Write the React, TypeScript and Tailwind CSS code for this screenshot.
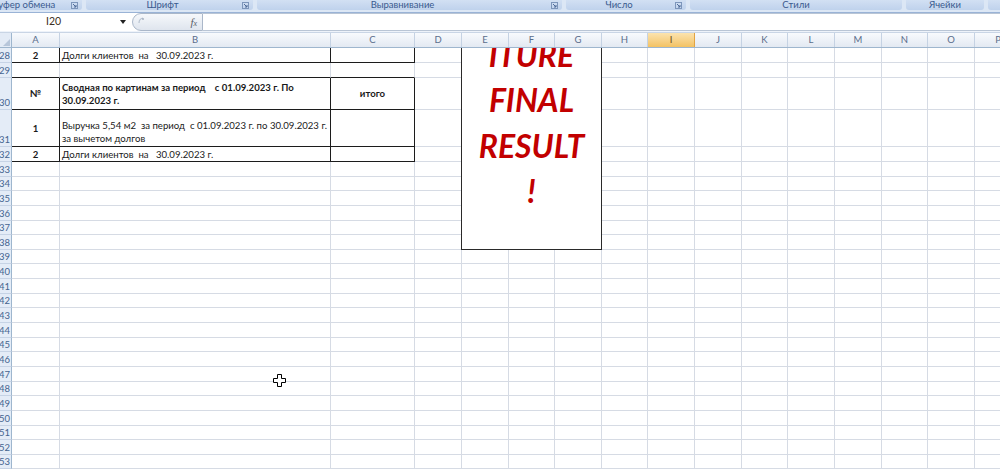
import React from "react";

type Col = { name: string; w: string };

const COLS: Col[] = [
  { name: "A", w: "w-[48px]" },
  { name: "B", w: "w-[271px]" },
  { name: "C", w: "w-[84px]" },
  { name: "D", w: "w-[47px]" },
  { name: "E", w: "w-[47px]" },
  { name: "F", w: "w-[46px]" },
  { name: "G", w: "w-[47px]" },
  { name: "H", w: "w-[46px]" },
  { name: "I", w: "w-[47px]" },
  { name: "J", w: "w-[47px]" },
  { name: "K", w: "w-[46px]" },
  { name: "L", w: "w-[47px]" },
  { name: "M", w: "w-[47px]" },
  { name: "N", w: "w-[46px]" },
  { name: "O", w: "w-[47px]" },
  { name: "P", w: "w-[47px]" },
];

const GRID = "border-r border-b border-[#d6dbe4]";
const BOXED = "border-r border-b border-[#1c1c1c]";
const UNDERLINED = "border-r border-b border-r-[#d6dbe4] border-b-[#1c1c1c]";

type RowDef = {
  n: number;
  h: string;
  // border style for columns A..C
  edge?: string;
  cells?: React.ReactNode[];
};

const bold = "font-bold";

const ROWS: RowDef[] = [
  {
    n: 28,
    h: "h-[15px]",
    edge: BOXED,
    cells: [
      <div className={`flex h-full items-center justify-center ${bold}`}>2</div>,
      <div className="flex h-full items-center whitespace-pre pl-[2px]">Долги клиентов  на   30.09.2023 г.</div>,
      null,
    ],
  },
  { n: 29, h: "h-[15px]", edge: UNDERLINED },
  {
    n: 30,
    h: "h-[32px]",
    edge: BOXED,
    cells: [
      <div className={`flex h-full items-center justify-center ${bold}`}>№</div>,
      <div className={`flex h-full flex-col justify-center whitespace-pre pl-[2px] ${bold}`}>
        <div>Сводная по картинам за период    с 01.09.2023 г. По</div>
        <div>30.09.2023 г.</div>
      </div>,
      <div className={`flex h-full items-center justify-center ${bold}`}>итого</div>,
    ],
  },
  {
    n: 31,
    h: "h-[37px]",
    edge: BOXED,
    cells: [
      <div className={`flex h-full items-center justify-center ${bold}`}>1</div>,
      <div className="flex h-full flex-col justify-end whitespace-pre pb-[1px] pl-[2px]">
        <div>Выручка 5,54 м2  за период  с 01.09.2023 г. по 30.09.2023 г.</div>
        <div>за вычетом долгов</div>
      </div>,
      null,
    ],
  },
  {
    n: 32,
    h: "h-[15px]",
    edge: BOXED,
    cells: [
      <div className={`flex h-full items-center justify-center ${bold}`}>2</div>,
      <div className="flex h-full items-center whitespace-pre pl-[2px]">Долги клиентов  на   30.09.2023 г.</div>,
      null,
    ],
  },
];

for (let n = 33; n <= 54; n++) ROWS.push({ n, h: "h-[14.65px]" });

function Launcher() {
  return (
    <svg width="7" height="7" viewBox="0 0 7 7" className="absolute right-[4px] top-[2px]">
      <rect x="0.5" y="0.5" width="6" height="6" fill="none" stroke="#7d96bb" />
      <path d="M2 2 L5 5 M5 3 L5 5 L3 5" stroke="#4e6a96" fill="none" />
    </svg>
  );
}

function Group({ w, label, launcher, className = "" }: { w: string; label?: string; launcher?: boolean; className?: string }) {
  return (
    <div
      className={`relative flex h-[10px] shrink-0 justify-center rounded-b-[3px] bg-gradient-to-b from-[#d2e0f3] to-[#bfd2ec] ${w} ${launcher ? "pr-[14px]" : ""} ${className}`}
    >
      {label && <span className="text-[9.5px] leading-[10px] text-[#3a5a8e]">{label}</span>}
      {launcher && <Launcher />}
    </div>
  );
}

function RibbonLabels() {
  return (
    <div className="flex h-[13px] gap-[4px] overflow-hidden border-b border-[#9ab3d6] bg-[#dce7f5]">
      <Group w="w-[102px]" label="Буфер обмена" launcher className="ml-[-20px]" />
      <Group w="w-[167px]" label="Шрифт" launcher />
      <Group w="w-[305px]" label="Выравнивание" launcher />
      <Group w="w-[120px]" label="Число" launcher />
      <Group w="w-[212px]" label="Стили" />
      <Group w="w-[78px]" label="Ячейки" />
      <Group w="w-[80px]" />
    </div>
  );
}

function FormulaBar() {
  return (
    <div className="flex h-[18px] items-stretch bg-white">
      <div className="flex w-[118px] items-center pl-[46px] text-[10.5px] text-[#3d3024]">I20</div>
      <div className="flex w-[14px] items-center">
        <svg width="6" height="4" viewBox="0 0 6 4" className="ml-[2px]">
          <path d="M0 0 H6 L3 4 Z" fill="#222" />
        </svg>
      </div>
      <div className="relative flex w-[71px] items-center justify-end rounded-l-full border border-[#aab7c9] bg-gradient-to-b from-[#f6f8fb] to-[#dfe5ee] pr-[5px]">
        <svg width="8" height="8" viewBox="0 0 8 8" className="absolute left-[5px] top-[3px]">
          <path d="M1 6 Q1 2 5 1" stroke="#b9c3d1" fill="none" strokeWidth="1.2" />
          <circle cx="5" cy="2" r="0.9" fill="#a0acbd" />
        </svg>
        <span className="font-['Liberation_Serif',serif] text-[11px] italic text-[#555c66]">
          f<span className="text-[8px]">x</span>
        </span>
      </div>
      <div className="flex-1 border-y border-[#b9c5d5] bg-white" />
    </div>
  );
}

function HeaderRow() {
  return (
    <div className="flex h-[15px] border-b border-[#9eb6ce]">
      <div className="relative w-[12px] shrink-0 border-r border-[#9eb6ce] bg-[#e3ebf6]">
        <svg width="7" height="7" viewBox="0 0 7 7" className="absolute bottom-[1px] right-[1px]">
          <path d="M7 0 V7 H0 Z" fill="#b7c6da" />
        </svg>
      </div>
      {COLS.map((c) => (
        <div
          key={c.name}
          className={`flex shrink-0 items-center justify-center border-r text-[9.5px] ${c.w} ${
            c.name === "I"
              ? "border-[#e2a443] bg-gradient-to-b from-[#fbe3ae] to-[#f3c262] text-[#6b4a14]"
              : "border-[#c5d2e3] bg-gradient-to-b from-[#f8fafd] to-[#e3e9f2] text-[#5a6d8b]"
          }`}
        >
          {c.name}
        </div>
      ))}
    </div>
  );
}

function SheetRow({ row }: { row: RowDef }) {
  return (
    <div className={`flex shrink-0 ${row.h}`}>
      <div className="flex w-[12px] shrink-0 items-end justify-end overflow-hidden border-r border-b border-r-[#9eb6ce] border-b-[#c6d3e5] bg-[#e4ecf7] pr-[1px] text-[9.5px] leading-[12px] text-[#44648f]">
        {row.n}
      </div>
      {COLS.map((c, i) => (
        <div key={c.name} className={`shrink-0 overflow-visible ${c.w} ${i < 3 && row.edge ? row.edge : GRID}`}>
          {row.cells?.[i] ?? null}
        </div>
      ))}
    </div>
  );
}

function TextBox() {
  return (
    <div className="absolute left-[461px] top-[-67px] h-[269px] w-[141px] border border-[#2a2a2a] bg-white pt-[4px] text-center font-['Lato','Noto_Sans',sans-serif] text-[32px] leading-[45.5px] font-bold italic text-[#c20000]">
      <div>FURN</div>
      <div>ITURE</div>
      <div>FINAL</div>
      <div>RESULT</div>
      <div>!</div>
    </div>
  );
}

function CrossCursor() {
  return (
    <svg width="13" height="13" viewBox="0 0 13 13" className="absolute left-[273px] top-[374px]">
      <path d="M4.5 0.5 H8.5 V4.5 H12.5 V8.5 H8.5 V12.5 H4.5 V8.5 H0.5 V4.5 H4.5 Z" fill="#fff" stroke="#000" strokeWidth="1" />
    </svg>
  );
}

export default function App() {
  return (
    <div className="relative h-[469px] w-[1000px] overflow-hidden bg-white font-['Lato','Noto_Sans',sans-serif]">
      <RibbonLabels />
      <FormulaBar />
      <div className="h-[2px] border-b border-[#c9d5e5] bg-[#eef3fa]" />
      <HeaderRow />
      <div className="relative h-[421px] overflow-hidden text-[9.6px] leading-[13px] text-[#1a1a1a]">
        {ROWS.map((r) => (
          <SheetRow key={r.n} row={r} />
        ))}
        <TextBox />
      </div>
      <CrossCursor />
    </div>
  );
}
